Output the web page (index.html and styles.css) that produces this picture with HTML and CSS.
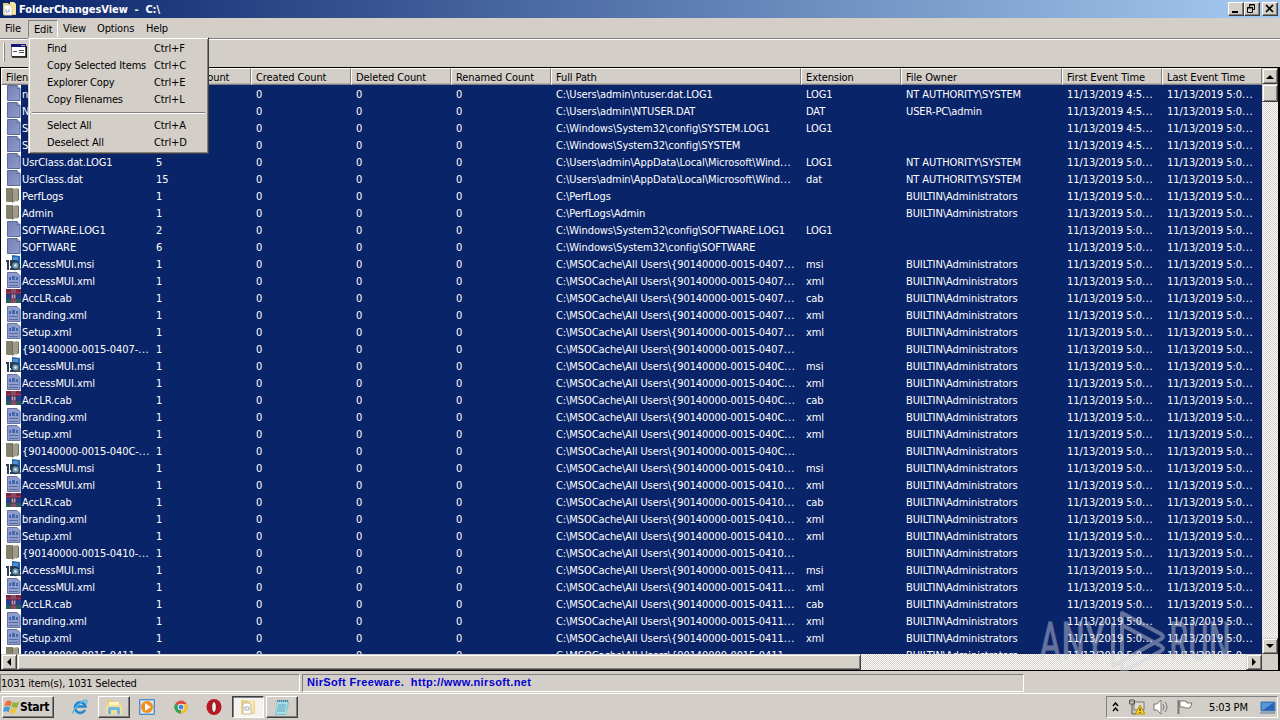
FILE: index.html
```html
<!DOCTYPE html>
<html lang="en">
<head>
    <meta charset="UTF-8">
    <meta name="viewport" content="width=device-width, initial-scale=1.0">
    <title>FolderChangesView</title>
    <link rel="stylesheet" href="styles.css">
</head>
<body>
    <svg class="defs">
        <linearGradient id="pageFill" x1="0" y1="0" x2="1" y2="1">
            <stop offset="0" stop-color="#7480b6"/><stop offset="1" stop-color="#8f9bcb"/>
        </linearGradient>
        <symbol id="file" viewBox="0 0 16 16">
            <path d="M1.500 .5h9.500l3 3v12H1.500z" fill="url(#pageFill)" stroke="#5d6995"/>
            <path d="M11 .5v3h3" fill="#aab3da" stroke="#5d6995"/>
        </symbol>
        <symbol id="folder" viewBox="0 0 16 16">
            <path d="M0 1h7v14H1L0 14z" fill="#85806b"/>
            <path d="M6 2l6-1v12l-6 3z" fill="#a09c88"/>
            <path d="M12 2h1v11l-3 2 2-3z" fill="#686b70"/>
            <path d="M6.500 2v13" stroke="#6c6c64"/>
        </symbol>
        <symbol id="xml" viewBox="0 0 16 16">
            <path d="M1.500 .5h9.500l3 3v12H1.500z" fill="#8e9dce" stroke="#66719c"/>
            <path d="M3 5h2v3H3zM6 4h3v4H6zM10 5h2v3h-2z" fill="#4369ad"/>
            <path d="M3 10.500h9M3 13.500h9" stroke="#566c9f"/>
        </symbol>
        <symbol id="msi" viewBox="0 0 16 16">
            <path d="M6 0l8 1v7H6z" fill="#2665ae"/>
            <path d="M7 2h5v3H7z" fill="#4f92d1"/>
            <path d="M0 5h3v10H1V7H0z" fill="#303c51"/>
            <path d="M4 5h5v2H6v2h3v6H4v-2h3v-2H4z" fill="#303c51"/>
            <circle cx="9.500" cy="10.500" r="4" fill="#6c98af" stroke="#1c344d" stroke-width="1.500"/>
            <circle cx="9.500" cy="10.500" r="1.200" fill="#d9edf2"/>
            <path d="M13 10l2 5h-4z" fill="#4b5560"/>
        </symbol>
        <symbol id="cab" viewBox="0 0 16 16">
            <path d="M0 0h15v5H0z" fill="#782743"/>
            <path d="M0 5h15v5H0z" fill="#253f8c"/>
            <path d="M0 10h15v4H0z" fill="#285e57"/>
            <path d="M5 0h5v14H5z" fill="#8a4d65"/>
            <path d="M5 5h5v5H5z" fill="#9fa5bd" stroke="#4d2944"/>
            <path d="M7.500 5v4M0 3.500h5m5 0h5" stroke="#a4375c"/>
        </symbol>
    </svg>

    <div class="window">
        <div class="title-bar">
            <svg class="app-icon" viewBox="0 0 16 16">
                <path d="M1 2h5l1 1h7v11H1z" fill="#e7ca76"/>
                <path d="M8 1h4l2 2v10H8z" fill="#f4e3a0"/>
                <path d="M2 4h6l2 2v8H2z" fill="#fff" stroke="#d7caa3"/>
                <path d="M4 8v3h3V8" fill="none" stroke="#8ba7c9"/>
            </svg>
            <span class="title">FolderChangesView&nbsp; -&nbsp; C:\</span>
            <div class="win-btn"><svg viewBox="0 0 13 11"><path d="M3 9h6" stroke="#000" stroke-width="2"/></svg></div>
            <div class="win-btn"><svg viewBox="0 0 13 11"><path d="M4.500 4V1.500h5v5H8M4 2h6M2.500 4.500h5v5h-5zM2 5h6" fill="none" stroke="#000"/></svg></div>
            <div class="win-btn close"><svg viewBox="0 0 13 11"><path d="M3 2l7 7M10 2L3 9" stroke="#000" stroke-width="1.700"/></svg></div>
        </div>
        <div class="menu-bar">
            <span class="m-file">File</span>
            <div class="m-edit">Edit
                <div class="menu">
                    <div class="item"><span>Find</span><span>Ctrl+F</span></div>
                    <div class="item"><span>Copy Selected Items</span><span>Ctrl+C</span></div>
                    <div class="item"><span>Explorer Copy</span><span>Ctrl+E</span></div>
                    <div class="item"><span>Copy Filenames</span><span>Ctrl+L</span></div>
                    <div class="separator"></div>
                    <div class="item"><span>Select All</span><span>Ctrl+A</span></div>
                    <div class="item"><span>Deselect All</span><span>Ctrl+D</span></div>
                </div>
            </div>
            <span class="m-view">View</span>
            <span class="m-options">Options</span>
            <span>Help</span>
        </div>
        <div class="toolbar">
            <div class="grip"></div>
            <svg viewBox="0 0 16 14">
                <path d="M0 0h15v13H0z" fill="#fff"/>
                <path d="M.5.500h14v12H.5z" fill="none" stroke="#777"/>
                <path d="M0 0h15v3H0z" fill="#171778"/>
                <path d="M2 7.500h4m2-1h5m-5 2h5" stroke="#555"/>
                <path d="M1 13h14.500V2" fill="none" stroke="#111" stroke-width="1.500"/>
                <path d="M10 1.500h4" stroke="#aaa"/>
            </svg>
        </div>

        <div class="list-frame">
            <div class="list">
                <div class="header cols">
                    <span>Filename</span><span>Modified Count</span><span>Created Count</span><span>Deleted Count</span><span>Renamed Count</span><span>Full Path</span><span>Extension</span><span>File Owner</span><span>First Event Time</span><span>Last Event Time</span>
                </div>
                <div id="rows"></div>
            </div>
            <div class="v-scroll">
                <div class="scroll-btn"><svg viewBox="0 0 8 5"><path d="M0 5l4-4 4 4z"/></svg></div>
                <div class="v-thumb"></div>
                <div class="scroll-btn down"><svg viewBox="0 0 8 5"><path d="M0 0h8L4 4z"/></svg></div>
            </div>
            <div class="h-scroll">
                <div class="scroll-btn"><svg viewBox="0 0 8 8"><path d="M6 0v8L2 4z"/></svg></div>
                <div class="h-thumb"></div>
                <div class="scroll-btn right"><svg viewBox="0 0 8 8"><path d="M2 0v8l4-4z"/></svg></div>
            </div>
            <div class="corner"></div>
        </div>

        <div class="status-bar">
            <div class="count">1031 item(s), 1031 Selected</div>
            <div class="nirsoft">NirSoft Freeware.&nbsp; http://www.nirsoft.net</div>
        </div>
    </div>

    <div class="taskbar">
        <div class="start">
            <svg viewBox="0 0 18 17">
                <path d="M3 3q3-3 6 0L8 8Q5 6 1.500 8z" fill="#ed7135"/>
                <path d="M10 3q3 2 7 0l-2 6q-3 1-6-1z" fill="#8cb53d"/>
                <path d="M1 9q4-2 6.500 0L6 14q-3-2-6 0z" fill="#459cd6"/>
                <path d="M8.500 9q3 2 6 .5L13 15q-3 1-6-1z" fill="#f1c33b"/>
            </svg>
            <span>Start</span>
        </div>
        <div class="task">
            <svg viewBox="0 0 18 18">
                <path d="M14 12a5.300 5.300 0 1 1 .5-3.500H5.500" fill="none" stroke="#2487d0" stroke-width="2.600"/>
                <path d="M2.500 15.500C0 13 12 1 15.500 2.500c1 1 0 2.500-1 3.500" fill="none" stroke="#56b4e7" stroke-width="1.500"/>
            </svg>
        </div>
        <div class="task raised">
            <svg viewBox="0 0 18 18">
                <path d="M2 2h6l1 2h7v12H2z" fill="#e9ce76"/>
                <path d="M4 4h10v5H4z" fill="#fff5c8"/>
                <path d="M1 7h16v9H1z" fill="#f2df96"/>
                <path d="M3 16v-5q0-2 2-2h8q2 0 2 2v5h-3v-4H6v4z" fill="#71b5e5"/>
            </svg>
        </div>
        <div class="task">
            <svg viewBox="0 0 18 18">
                <path d="M1.500 1.500h15v15h-15z" fill="#9fc6e7" stroke="#568ac0"/>
                <path d="M3 3h12v12H3z" fill="#d9e9f6"/>
                <circle cx="9" cy="9" r="6" fill="#f48c16"/>
                <path d="M7 5l6 4-6 4z" fill="#fff"/>
            </svg>
        </div>
        <div class="task">
            <svg viewBox="0 0 18 18">
                <circle cx="9" cy="9" r="6.500" fill="#dd4c3d"/>
                <path d="M3.200 5.800L9 9v6.500A6.500 6.500 0 0 1 3.200 5.800" fill="#32a35b"/>
                <path d="M9 9l1-3h5a6.500 6.500 0 0 1-6 9.500z" fill="#f1c331"/>
                <circle cx="9" cy="9" r="3.300" fill="#fff"/>
                <circle cx="9" cy="9" r="2.500" fill="#4e85cf"/>
            </svg>
        </div>
        <div class="task">
            <svg viewBox="0 0 18 18">
                <ellipse cx="9" cy="9" rx="7.500" ry="8" fill="#bd1822"/>
                <ellipse cx="9" cy="9" rx="2.400" ry="5.500" fill="#eee" stroke="#77141a"/>
            </svg>
        </div>
        <div class="task pressed">
            <svg viewBox="0 0 18 18">
                <path d="M2 2h6l1 1h7v13H2z" fill="#ead18b"/>
                <path d="M10 2h5v13h-5z" fill="#f6e6b4"/>
                <path d="M4 5h6l2 2v9H4z" fill="#fff" stroke="#ccbb91"/>
                <path d="M6 9v3h4V9z" fill="none" stroke="#9baac0"/>
            </svg>
        </div>
        <div class="task raised">
            <svg viewBox="0 0 18 18">
                <path d="M4 2h11l1 3-3 12H2z" fill="#77bfd4"/>
                <path d="M4 4h11l-2 12H3z" fill="#a8dce7"/>
                <path d="M4 3h12" stroke="#587d88" stroke-width="2" stroke-dasharray="1 1"/>
                <path d="M5 7h8M5 9h8M4 11h8M4 13h8" stroke="#67a9bc"/>
            </svg>
        </div>
        <div class="tray">
            <svg class="chevrons" viewBox="0 0 7 10"><path d="M1 4l2.500-3L6 4M1 9l2.500-3L6 9" fill="none" stroke="#000" stroke-width="1.400"/></svg>
            <svg class="network" viewBox="0 0 16 16">
                <path d="M5 3h10v8H5z" fill="#ddd" stroke="#777"/>
                <path d="M.5 1v4h5V1M2 0v3m2-3v3M3 5v10h4" fill="none" stroke="#555"/>
                <path d="M7 14h8" stroke="#777" stroke-width="2"/>
                <path d="M11 6l5 9H6z" fill="#f7cf20" stroke="#b59313"/>
                <path d="M11 9v3m0 1v1" stroke="#222"/>
            </svg>
            <svg class="sound" viewBox="0 0 16 16">
                <path d="M1 5h3l4-4v14l-4-4H1z" fill="#fff" stroke="#777"/>
                <path d="M10 5q2 3 0 6M12 3q4 5 0 10" fill="none" stroke="#777"/>
            </svg>
            <svg class="flag" viewBox="0 0 16 16">
                <path d="M1.500 1v14" stroke="#777" stroke-width="2"/>
                <path d="M3 2h6l1 2h5l-2 5H8L7 8H3z" fill="#fff" stroke="#777"/>
            </svg>
            <span class="clock">5:03 PM</span>
            <svg class="desktop" viewBox="0 0 16 13">
                <path d="M1 1h14v9H1z" fill="#2863b5" stroke="#4b83bc"/>
                <path d="M2 2h11L3 9H2z" fill="#5798db"/>
                <path d="M0 12h15" stroke="#53789c"/>
            </svg>
        </div>
    </div>

    <svg class="watermark" viewBox="0 0 200 70">
        <text x="3" y="54" textLength="66" lengthAdjust="spacingAndGlyphs">ANY</text>
        <path d="M77 17v35M86 15v37M86 15V7l39 21q4 3 0 5L77 60v-8M86 19l39 21q4 3 0 5L86 66v-8"/>
        <text x="133" y="54" textLength="62" lengthAdjust="spacingAndGlyphs">RUN</text>
    </svg>

    <script>
        const SYS = 'NT AUTHORITY\\SYSTEM';
        const ADM = 'BUILTIN\\Administrators';
        const CFG = 'C:\\Windows\\System32\\config\\';
        const WIND = 'C:\\Users\\admin\\AppData\\Local\\Microsoft\\Wind...';

        // icon, filename, modified, path, extension, owner, first event
        const items = [
            ['file', 'ntuser.dat.LOG1', 4, 'C:\\Users\\admin\\ntuser.dat.LOG1', 'LOG1', SYS, '4:5'],
            ['file', 'NTUSER.DAT', 6, 'C:\\Users\\admin\\NTUSER.DAT', 'DAT', 'USER-PC\\admin', '4:5'],
            ['file', 'SYSTEM.LOG1', 6, CFG + 'SYSTEM.LOG1', 'LOG1', '', '4:5'],
            ['file', 'SYSTEM', 12, CFG + 'SYSTEM', '', '', '4:5'],
            ['file', 'UsrClass.dat.LOG1', 5, WIND, 'LOG1', SYS, '5:0'],
            ['file', 'UsrClass.dat', 15, WIND, 'dat', SYS, '5:0'],
            ['folder', 'PerfLogs', 1, 'C:\\PerfLogs', '', ADM, '5:0'],
            ['folder', 'Admin', 1, 'C:\\PerfLogs\\Admin', '', ADM, '5:0'],
            ['file', 'SOFTWARE.LOG1', 2, CFG + 'SOFTWARE.LOG1', 'LOG1', '', '5:0'],
            ['file', 'SOFTWARE', 6, CFG + 'SOFTWARE', '', '', '5:0']
        ];

        ['0407', '040C', '0410', '0411'].forEach(id => {
            const path = 'C:\\MSOCache\\All Users\\{90140000-0015-' + id + '...';
            const folder = '{90140000-0015-' + id + (id === '0411' ? '...' : '-...');
            items.push(
                ['msi', 'AccessMUI.msi', 1, path, 'msi', ADM, '5:0'],
                ['xml', 'AccessMUI.xml', 1, path, 'xml', ADM, '5:0'],
                ['cab', 'AccLR.cab', 1, path, 'cab', ADM, '5:0'],
                ['xml', 'branding.xml', 1, path, 'xml', ADM, '5:0'],
                ['xml', 'Setup.xml', 1, path, 'xml', ADM, '5:0'],
                ['folder', folder, 1, path, '', ADM, '5:0']
            );
        });

        // the dots of a shortened text are set a little wider
        const dots = text => String(text).replace('...', '<i>...</i>');

        document.getElementById('rows').innerHTML = items.map(item => {
            const [icon, name, modified, path, ext, owner, first] = item;
            const cells = [modified, 0, 0, 0, path, ext, owner,
                `11/13/2019 ${first}...`, '11/13/2019 5:0...'];
            return `<div class="row cols">
                <div class="name"><svg><use href="#${icon}"/></svg><span>${dots(name)}</span></div>
                ${cells.map(c => `<span>${dots(c)}</span>`).join('')}
            </div>`;
        }).join('');
    </script>
</body>
</html>
```
FILE: styles.css
```css
* {
    box-sizing: border-box;
}
body {
    margin: 0;
    width: 1280px;
    height: 720px;
    overflow: hidden;
    background-color: #d4cec8;
    color: #000;
    font-family: "DejaVu Sans Condensed", "DejaVu Sans", sans-serif;
    font-stretch: condensed;
    font-size: 11px;
    line-height: 17px;
    letter-spacing: -0.15px;
    white-space: nowrap;
}
svg {
    display: block;
    flex-shrink: 0;
}
.defs {
    position: absolute;
    width: 0;
    height: 0;
}
.window {
    height: 693px;
    display: flex;
    flex-direction: column;
}

/* title bar */
.title-bar {
    height: 18px;
    display: flex;
    align-items: center;
    padding: 0 2px;
    background: linear-gradient(to right, #0a246a, #a6caf0);
}
.app-icon {
    width: 16px;
    height: 16px;
}
.title {
    flex: 1;
    margin-left: 1px;
    color: #fff;
    font-weight: bold;
    letter-spacing: -0.05px;
}
.win-btn {
    width: 16px;
    height: 14px;
    background-color: #d4d0c8;
    border: 1px solid;
    border-color: #fff #404040 #404040 #fff;
    box-shadow: inset -1px -1px #808080;
}
.win-btn svg {
    width: 13px;
    height: 11px;
}
.close {
    margin-left: 2px;
}

/* menu bar */
.menu-bar {
    height: 21px;
    display: flex;
    padding: 2px 0 0 5px;
    border-bottom: 1px solid #808080;
}
.m-file {
    width: 23px;
}
.m-edit {
    position: relative;
    width: 30px;
    height: 18px;
    padding-left: 5px;
    border: 1px solid;
    border-color: #808080 #fff #fff #808080;
}
.m-view {
    width: 34px;
    margin-left: 5px;
}
.m-options {
    width: 49px;
}
.menu {
    position: absolute;
    z-index: 2;
    left: -1px;
    top: 16px;
    width: 181px;
    height: 117px;
    padding: 2px;
    background-color: #d4cec8;
    border: 1px solid;
    border-color: #d4cec8 #404040 #404040 #d4cec8;
    box-shadow: inset 1px 1px #fff, inset -1px -1px #808080;
}
.item {
    display: flex;
    height: 17px;
    padding-left: 16px;
}
.item span:first-child {
    width: 107px;
}
.separator {
    height: 2px;
    margin: 4px 1px 3px;
    border-top: 1px solid #808080;
    border-bottom: 1px solid #fff;
}

/* toolbar */
.toolbar {
    height: 28px;
    display: flex;
    align-items: flex-start;
    border-top: 1px solid #fff;
}
.grip {
    width: 2px;
    height: 19px;
    margin: 3px 6px 0 3px;
    border-left: 1px solid #fff;
    border-right: 1px solid #808080;
}
.toolbar svg {
    width: 16px;
    height: 14px;
    margin: 4px 0 0;
}

/* file list */
.list-frame {
    height: 604px;
    display: grid;
    grid-template-columns: 1261px 16px;
    grid-template-rows: 586px 16px;
    border: 1px solid #000;
    border-right-width: 2px;
}
.list {
    overflow: hidden;
    background-color: #fff;
}
.cols {
    display: grid;
    grid-template-columns: 150px 100px 100px 100px 100px 250px 100px 161px 100px 100px;
}
.header {
    height: 17px;
    background-color: #d4cec8;
}
.header span {
    padding-left: 4px;
    border: 1px solid;
    border-color: #fff #808080 #808080 #fff;
    box-shadow: inset 0 -1px #b4b0a8;
    overflow: hidden;
    letter-spacing: -0.1px;
}
.row {
    height: 17px;
    line-height: 19px;
    letter-spacing: -0.08px;
    color: #fff;
    background: linear-gradient(to right, #fff 20px, #0a246a 20px);
}
.row i {
    font-style: normal;
    letter-spacing: 0.6px;
}
.row > span {
    padding-left: 5px;
}
.name {
    display: flex;
}
.name svg {
    width: 16px;
    height: 16px;
    margin-left: 5px;
}

/* scroll bars */
.v-scroll, .h-scroll {
    display: flex;
    background: repeating-conic-gradient(#fff 0 25%, #d4d0c8 0 50%) 0 0 / 2px 2px;
}
.v-scroll {
    flex-direction: column;
}
.scroll-btn, .v-thumb, .h-thumb {
    background-color: #d4d0c8;
    border: 1px solid;
    border-color: #d4d0c8 #404040 #404040 #d4d0c8;
    box-shadow: inset 1px 1px #fff, inset -1px -1px #808080;
}
.scroll-btn {
    width: 16px;
    height: 16px;
    display: flex;
    align-items: center;
    justify-content: center;
}
.scroll-btn svg {
    width: 8px;
}
.v-thumb {
    height: 18px;
}
.h-thumb {
    width: 844px;
}
.down {
    margin-top: auto;
}
.right {
    margin-left: auto;
}
.corner {
    background-color: #d4d0c8;
}

/* status bar */
.status-bar {
    display: flex;
    gap: 2px;
    padding-top: 3px;
}
.count, .nirsoft {
    height: 18px;
    border: 1px solid;
    border-color: #808080 #fff #fff #808080;
}
.count {
    width: 300px;
    letter-spacing: -0.2px;
}
.nirsoft {
    width: 722px;
    padding-left: 4px;
    color: #0000d0;
    font-family: "Liberation Sans", sans-serif;
    font-weight: bold;
    line-height: 15px;
    letter-spacing: 0.35px;
}

/* taskbar */
.taskbar {
    height: 27px;
    display: flex;
    align-items: flex-start;
    padding: 2px 2px 0;
    border-top: 1px solid #fff;
}
.start {
    width: 52px;
    height: 22px;
    display: flex;
    align-items: center;
    margin-right: 10px;
    border: 1px solid;
    border-color: #fff #404040 #404040 #fff;
    box-shadow: inset -1px -1px #808080;
    font-weight: bold;
    font-size: 12px;
    letter-spacing: -0.3px;
}
.start svg {
    width: 17px;
    height: 16px;
}
.task {
    width: 32px;
    height: 22px;
    margin-right: 1.6px;
    display: flex;
    align-items: center;
    justify-content: center;
    border: 1px solid transparent;
}
.task svg {
    width: 18px;
    height: 18px;
}
.raised {
    border-color: #fff #404040 #404040 #fff;
    box-shadow: inset -1px -1px #808080;
}
.pressed {
    background-color: #f5f3ef;
    border-color: #404040 #fff #fff #404040;
    box-shadow: inset 1px 1px #808080;
}
.tray {
    width: 172px;
    height: 22px;
    display: flex;
    align-items: center;
    margin-left: auto;
    border: 1px solid;
    border-color: #808080 #fff #fff #808080;
}
.chevrons {
    width: 7px;
    height: 10px;
    margin-left: 5px;
}
.network, .sound, .flag {
    width: 16px;
    height: 16px;
}
.network {
    margin-left: 10px;
}
.sound {
    margin-left: 8px;
}
.flag {
    margin-left: 8px;
}
.clock {
    width: 51px;
    margin-left: 16px;
}
.desktop {
    width: 16px;
    height: 13px;
}

.watermark {
    position: absolute;
    z-index: 3;
    left: 1036px;
    top: 606px;
    width: 200px;
    height: 70px;
    opacity: 0.45;
    pointer-events: none;
}
.watermark text {
    fill: #d0d3dc;
    stroke: #d0d3dc;
    stroke-width: 0.8px;
    font-family: Roboto, sans-serif;
    font-size: 53px;
    letter-spacing: 0;
}
.watermark path {
    fill: none;
    stroke: #d0d3dc;
    stroke-width: 4;
    stroke-linejoin: round;
}
```
